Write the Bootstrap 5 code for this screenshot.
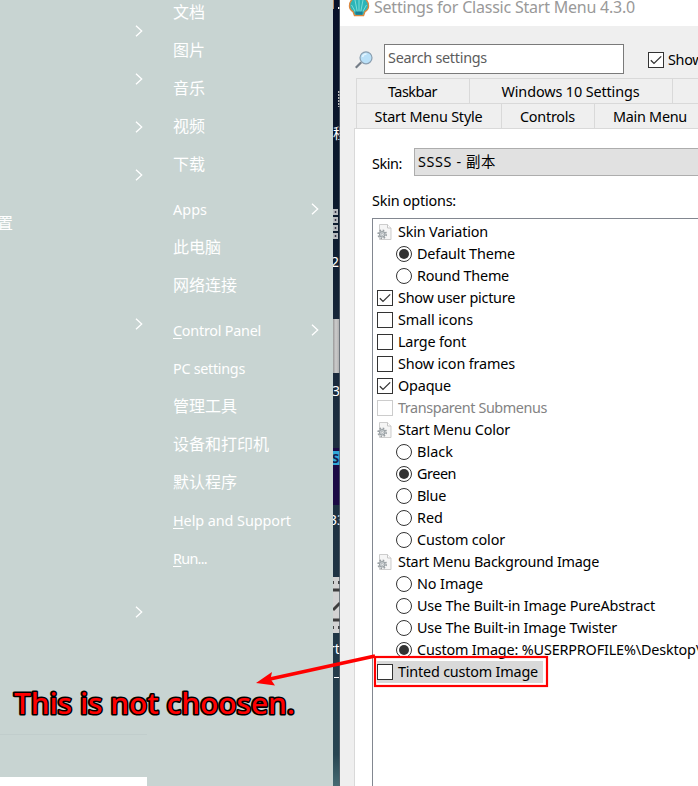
<!DOCTYPE html>
<html lang="en">
<head>
<meta charset="utf-8">
<title>Settings for Classic Start Menu</title>
<link href="https://cdn.jsdelivr.net/npm/bootstrap@5.3.0/dist/css/bootstrap.min.css" rel="stylesheet">
<style>
body{font-family:"Noto Sans","Noto Sans CJK SC",sans-serif;font-size:14.4px;line-height:22px;color:#000;background:#efefef}
.desk{width:698px;height:786px}
.fit{white-space:pre;display:inline-block;flex:none}
.start{width:333px;background:#c8d4d2;color:#fff}
.programs{width:147px;padding-top:7px}
.programs .prow{height:48px;padding-right:4px}
.cjk{font-family:"Noto Sans CJK SC",sans-serif;font-size:16px;font-weight:400;padding-bottom:2px}
.edge{margin-left:-3px}
.programs .far{margin-top:53px}
.programs .last{margin-top:240px}
.rule{height:1px;background:#c1cdcc;margin-top:98px}
.query{height:9px;background:#fff;margin-top:42px}
.places{width:186px;padding-left:26px;padding-right:14px;margin-top:-7px}
.places .item{height:38px}
.places .latin{padding-top:2px}
.places .group{margin-top:7px}
.latin svg{margin-top:-2px}
.item u{text-underline-offset:2px}
.win{width:358px}
.title{height:26px;color:#999;font-size:16px;padding-left:8px}
.title svg{margin-top:-12px;margin-right:4px}
.title .fit{margin-top:-12px}
.tools{padding:18px 0 0 15px;height:52px}
.glass{margin-top:7px}
.search{width:240px;height:30px;border:1px solid #7a7a7a;background:#fff;color:#5c5c5c;padding-left:3px;line-height:26px;margin-left:11px;margin-right:24px}
.showall{height:31px}
.tabsrow{height:25px;margin-left:16px;border-left:1px solid #d9d9d9;border-top:1px solid #d9d9d9}
.tabsrow>div{border-right:1px solid #d9d9d9;flex:none;display:flex;align-items:center;justify-content:center;padding-top:2px;padding-right:1px}
.w1{width:113px}.w2{width:203px}.w3{width:145px}.w4{width:93px}.w5{width:112px}
.pane{margin-left:14px;border-left:1px solid #d9d9d9;border-top:1px solid #d9d9d9;background:#fff;padding-left:17px}
.skinrow{padding-top:19px}
.combo{width:300px;height:28px;border:1px solid #adadad;background:#e1e1e1;padding-left:3px;margin-left:12px;line-height:26px}
.skinopts{margin-top:14px;height:28px}
.list{border:1px solid #828790;width:340px;height:580px;padding:2px 0 0 4px}
.opt{height:22px}
.opt svg{flex:none}
.opt .fit{margin-left:5px}
.sub{padding-left:19px}
.off{color:#838383}
.sel{background:#d9d9d9;width:166px}
.notes{left:0;top:0}
</style>
<script src="https://cdn.jsdelivr.net/npm/bootstrap@5.3.0/dist/js/bootstrap.bundle.min.js"></script>
</head>
<body class="overflow-hidden">
<svg class="d-none">
<symbol id="chev" viewBox="0 0 8 12"><path d="M1 .8 6.7 6 1 11.2" fill="none" stroke="#fff" stroke-width="1.3"/></symbol>
<symbol id="box" viewBox="0 0 16 16"><rect x=".5" y=".5" width="15" height="15" fill="#fff" stroke="#333"/></symbol>
<symbol id="boxoff" viewBox="0 0 16 16"><rect x=".5" y=".5" width="15" height="15" fill="#fff" stroke="#ccc"/></symbol>
<symbol id="check" viewBox="0 0 16 16"><rect x=".5" y=".5" width="15" height="15" fill="#fff" stroke="#333"/><path d="M2.8 8.2 6 11.4 13.2 4.4" fill="none" stroke="#333" stroke-width="1.3"/></symbol>
<symbol id="radio" viewBox="0 0 16 16"><circle cx="8" cy="8" r="7.5" fill="#fff" stroke="#333"/></symbol>
<symbol id="dot" viewBox="0 0 16 16"><circle cx="8" cy="8" r="7.5" fill="#fff" stroke="#333"/><circle cx="8" cy="8" r="5" fill="#333"/></symbol>
<symbol id="page" viewBox="0 0 16 16"><path d="M2.5.5h8l3.500 3.500v11.500H2.500z" fill="#f5f5f5" stroke="#cdcdcd"/><path d="M10.500.5V4H14" fill="#fff" stroke="#c5c5c5"/><circle cx="5.200" cy="10.300" r="4" fill="none" stroke="#9aa0a4" stroke-width="1.700" stroke-dasharray="1.600 1.540"/><circle cx="5.200" cy="10.300" r="2.700" fill="#dde2e4" stroke="#9ba2a6" stroke-width="1.100"/><circle cx="5.200" cy="10.300" r="1.100" fill="#fff" stroke="#8d9499" stroke-width=".6"/></symbol>
</svg>

<div class="desk d-flex position-relative overflow-hidden">
  <div class="start d-flex flex-shrink-0">
    <div class="programs">
      <div class="prow d-flex align-items-center justify-content-end"><svg width="8" height="12"><use href="#chev"/></svg></div>
      <div class="prow d-flex align-items-center justify-content-end"><svg width="8" height="12"><use href="#chev"/></svg></div>
      <div class="prow d-flex align-items-center justify-content-end"><svg width="8" height="12"><use href="#chev"/></svg></div>
      <div class="prow d-flex align-items-center justify-content-end"><svg width="8" height="12"><use href="#chev"/></svg></div>
      <div class="prow d-flex align-items-center cjk"><span class="edge">置</span></div>
      <div class="prow far d-flex align-items-center justify-content-end"><svg width="8" height="12"><use href="#chev"/></svg></div>
      <div class="prow last d-flex align-items-center justify-content-end"><svg width="8" height="12"><use href="#chev"/></svg></div>
      <div class="rule"></div>
      <div class="query"></div>
    </div>
    <div class="places">
      <div class="item cjk d-flex align-items-center">文档</div>
      <div class="item cjk d-flex align-items-center">图片</div>
      <div class="item cjk d-flex align-items-center">音乐</div>
      <div class="item cjk d-flex align-items-center">视频</div>
      <div class="item cjk d-flex align-items-center">下载</div>
      <div class="item latin group d-flex align-items-center justify-content-between"><span class="fit" data-w="34">Apps</span><svg width="8" height="12"><use href="#chev"/></svg></div>
      <div class="item cjk d-flex align-items-center">此电脑</div>
      <div class="item cjk d-flex align-items-center">网络连接</div>
      <div class="item latin group d-flex align-items-center justify-content-between"><span class="fit" data-w="88"><u>C</u>ontrol Panel</span><svg width="8" height="12"><use href="#chev"/></svg></div>
      <div class="item latin d-flex align-items-center"><span class="fit" data-w="72">PC settings</span></div>
      <div class="item cjk d-flex align-items-center">管理工具</div>
      <div class="item cjk d-flex align-items-center">设备和打印机</div>
      <div class="item cjk d-flex align-items-center">默认程序</div>
      <div class="item latin d-flex align-items-center"><span class="fit" data-w="118"><u>H</u>elp and Support</span></div>
      <div class="item latin d-flex align-items-center"><span class="fit" data-w="34"><u>R</u>un...</span></div>
    </div>
  </div>

  <svg class="flex-shrink-0" width="7" height="786" viewBox="0 0 7 786" font-family="Noto Sans, Noto Sans CJK SC, sans-serif" font-size="14" fill="#fff">
    <defs><linearGradient id="night" x2="0" y2="1"><stop offset="0" stop-color="#08112a"/><stop offset=".25" stop-color="#0b1a2d"/><stop offset=".5" stop-color="#1b2c3e"/><stop offset=".8" stop-color="#203646"/><stop offset=".96" stop-color="#284552"/><stop offset="1" stop-color="#466b73"/></linearGradient>
    <linearGradient id="grey"><stop offset="0" stop-color="#999"/><stop offset=".4" stop-color="#ccc"/><stop offset="1" stop-color="#aaa"/></linearGradient></defs>
    <rect width="7" height="786" fill="url(#night)"/>
    <path d="M.5 0v9" stroke="#b88a63"/><rect x="5" y="7" width="2" height="2"/>
    <path d="M6 91v16" stroke="#bbb" stroke-width="2" stroke-dasharray="2 1"/>
    <text x="0" y="138">程</text>
    <path d="M2.500 209v30" stroke="#b8bcc0" stroke-width="5" stroke-dasharray="6 2"/><path d="M2.500 211v27" stroke="#334" stroke-width="1.500" stroke-dasharray="2 6"/>
    <text x="-2" y="267">2</text>
    <rect y="319" width="7" height="54" fill="url(#grey)"/>
    <text x="-1" y="396">3</text>
    <rect y="448" width="7" height="57" fill="#1b0a45"/><rect y="451" width="7" height="14" fill="#31a8d8"/><text x="-1" y="463" font-size="13" font-weight="700" fill="#17204f">S</text>
    <text x="-4" y="525">33</text>
    <rect y="577" width="7" height="56" fill="#d3d3d3"/><path d="M0 590h7M0 620h7M0 610 7 603" stroke="#3d3d3d" stroke-width="3"/><path d="M0 582.500h1m4 0h2M0 627.500h1m4 0h2" stroke="#444" stroke-width="3"/>
    <text x="-4" y="654">rt</text>
    <path d="M1 677.500h5" stroke="#fff"/>
    <path d="M6.500 0v786" stroke="#59636c" opacity=".75"/>
  </svg>

  <div class="win flex-shrink-0 d-flex flex-column overflow-hidden">
    <div class="title bg-white d-flex align-items-center flex-shrink-0">
      <svg width="22" height="22" viewBox="0 0 22 22"><path d="M11 1C5 1 1.500 5 1.500 10c0 2.500 1.500 4.500 3.500 5.500l1.500 4h9l1.500-4c2-1 3.500-3 3.500-5.500 0-5-3.500-9-9.500-9z" fill="#2cb5b8" stroke="#dc873f" stroke-width="1.400"/><path d="M8 17 3.500 9M9.500 17 7 4M11 17V2.500M12.500 17 15 4M14 17l4.500-8" stroke="#7cdcd8" stroke-width="1"/><path d="M7 15.500h8l-.8 3.300H7.800z" fill="#167f96"/></svg>
      <span class="fit" data-w="261">Settings for Classic Start Menu 4.3.0</span>
    </div>
    <div class="tools d-flex flex-shrink-0">
      <svg class="glass flex-shrink-0" width="18" height="18" viewBox="0 0 18 18"><path d="m.8 16.700 5.500-5.500" stroke="#747d87" stroke-width="2.200"/><circle cx="11" cy="6.800" r="6" fill="#b9e0f8" stroke="#8b9fb0" stroke-width="1.200"/><path d="M7.500 6c.5-2 2-3 4-3" stroke="#e4f5ff" fill="none" stroke-width="1.500"/></svg>
      <div class="search flex-shrink-0"><span class="fit" data-w="99">Search settings</span></div>
      <div class="showall d-flex align-items-center flex-shrink-0"><svg width="16" height="16"><use href="#check"/></svg><span class="fit ms-1" data-w="108">Show all settings</span></div>
    </div>
    <div class="tabsrow d-flex flex-shrink-0"><div class="w1"><span class="fit" data-w="49">Taskbar</span></div><div class="w2"><span class="fit" data-w="138">Windows 10 Settings</span></div></div>
    <div class="tabsrow d-flex flex-shrink-0"><div class="w3"><span class="fit" data-w="108">Start Menu Style</span></div><div class="w4"><span class="fit" data-w="55">Controls</span></div><div class="w5"><span class="fit" data-w="74">Main Menu</span></div></div>
    <div class="pane flex-grow-1">
      <div class="skinrow d-flex align-items-center"><span class="fit pt-1" data-w="30">Skin:</span><div class="combo flex-shrink-0"><span class="fit" data-w="78">SSSS - 副本</span></div></div>
      <div class="skinopts"><span class="fit" data-w="84">Skin options:</span></div>
      <div class="list" id="options"></div>
    </div>
  </div>

  <svg class="notes position-absolute" width="698" height="786">
    <rect x="375" y="657" width="172" height="29" fill="none" stroke="#f00" stroke-width="2.200"/>
    <path d="M375 656 270 679" stroke="#f00" stroke-width="3.500"/><path d="m256 683 16-11-1.500 7 4.500 6.500z" fill="#f00"/>
    <text x="14" y="714" textLength="281" lengthAdjust="spacingAndGlyphs" font-size="29" font-weight="500" font-family="Noto Sans, sans-serif" fill="#f00" stroke="#000" stroke-width="3.200" stroke-linejoin="round" paint-order="stroke">This is not choosen.</text>
  </svg>
</div>
<script>
const options=[["page","Skin Variation",90],["dot","Default Theme",98],["radio","Round Theme",92],["check","Show user picture",117],["box","Small icons",75],["box","Large font",68],["box","Show icon frames",117],["check","Opaque",53],["boxoff","Transparent Submenus",149],["page","Start Menu Color",112],["radio","Black",36],["dot","Green",39],["radio","Blue",29],["radio","Red",26],["radio","Custom color",88],["page","Start Menu Background Image",201],["radio","No Image",66],["radio","Use The Built-in Image PureAbstract",238],["radio","Use The Built-in Image Twister",200],["dot","Custom Image: %USERPROFILE%\\Desktop\\",284],["box","Tinted custom Image",140,"sel"]];
document.getElementById("options").innerHTML=options.map(([icon,label,w,extra])=>`<div class="opt d-flex align-items-center ${icon==="radio"||icon==="dot"?"sub":""} ${icon==="boxoff"?"off":""} ${extra||""}"><svg width="16" height="16"><use href="#${icon}"/></svg><span class="fit" data-w="${w}">${label}</span></div>`).join("");
// Track each label so that it occupies its design width
document.querySelectorAll("[data-w]").forEach(e=>{
  const n=e.textContent.length;
  e.style.letterSpacing=((+e.dataset.w-e.getBoundingClientRect().width)/n).toFixed(3)+"px";
});
</script>
</body>
</html>
